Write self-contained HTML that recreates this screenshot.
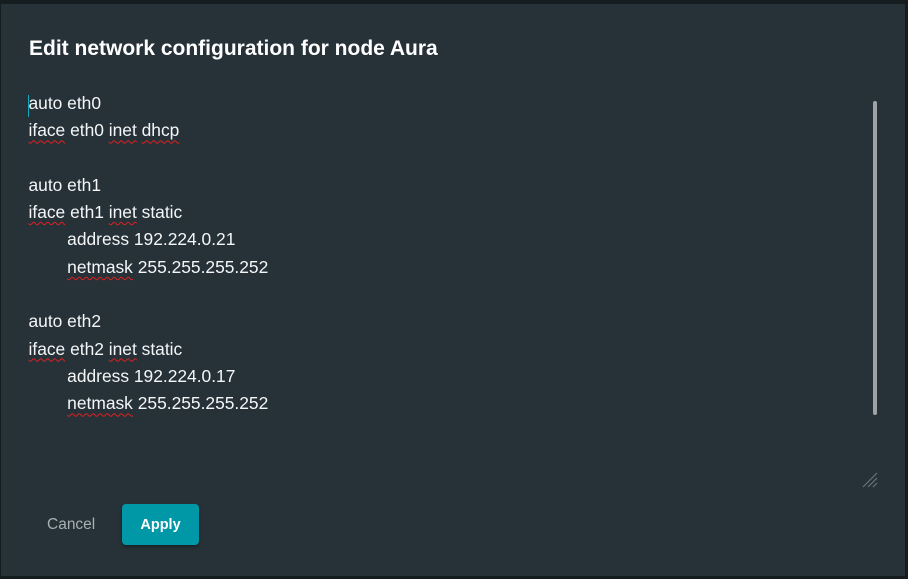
<!DOCTYPE html>
<html><head><meta charset="utf-8"><style>
html,body{margin:0;padding:0;width:908px;height:579px;overflow:hidden;background:#161d21;}
.dlg{position:absolute;left:1px;top:4px;width:904px;height:572px;background:#263238;}
h1{position:absolute;left:28px;top:33px;margin:0;font:bold 21px "Liberation Sans",sans-serif;color:#fff;white-space:nowrap;}
.txt{position:absolute;left:27.5px;top:86px;font:17.4px "Liberation Sans",sans-serif;color:#f4f6f7;line-height:27.3px;white-space:pre;}
.s{text-decoration:underline wavy #e02020;text-decoration-thickness:1px;text-underline-offset:3px;}
.caret{position:absolute;left:27px;top:91px;width:1px;height:22px;background:#1ab;}
.sb{position:absolute;left:872px;top:97px;width:4px;height:314px;background:#9ea3a6;border-radius:2px;}
.cancel{position:absolute;left:46px;top:512px;font:15.5px "Liberation Sans",sans-serif;color:#a7b0b5;}
.apply{position:absolute;left:121px;top:500px;width:77px;height:41px;background:#0097a7;border-radius:4px;color:#fff;font:bold 14.5px "Liberation Sans",sans-serif;text-align:center;line-height:42px;box-shadow:0 2px 3px rgba(0,0,0,.35);}
</style></head><body>
<div class="dlg">
<h1>Edit network configuration for node Aura</h1>
<div class="caret"></div>
<div class="txt">auto eth0
<span class="s">iface</span> eth0 <span class="s">inet</span> <span class="s">dhcp</span>

auto eth1
<span class="s">iface</span> eth1 <span class="s">inet</span> static
        address 192.224.0.21
        <span class="s">netmask</span> 255.255.255.252

auto eth2
<span class="s">iface</span> eth2 <span class="s">inet</span> static
        address 192.224.0.17
        <span class="s">netmask</span> 255.255.255.252</div>
<div class="sb"></div>
<svg style="position:absolute;left:860px;top:467px" width="18" height="18" viewBox="0 0 18 18"><g stroke="#6b7378" stroke-width="1.2"><line x1="2" y1="16" x2="16" y2="2"/><line x1="7" y1="16" x2="16" y2="7"/><line x1="12" y1="16" x2="16" y2="12"/></g></svg>
<div class="cancel">Cancel</div>
<div class="apply">Apply</div>
</div>
</body></html>
